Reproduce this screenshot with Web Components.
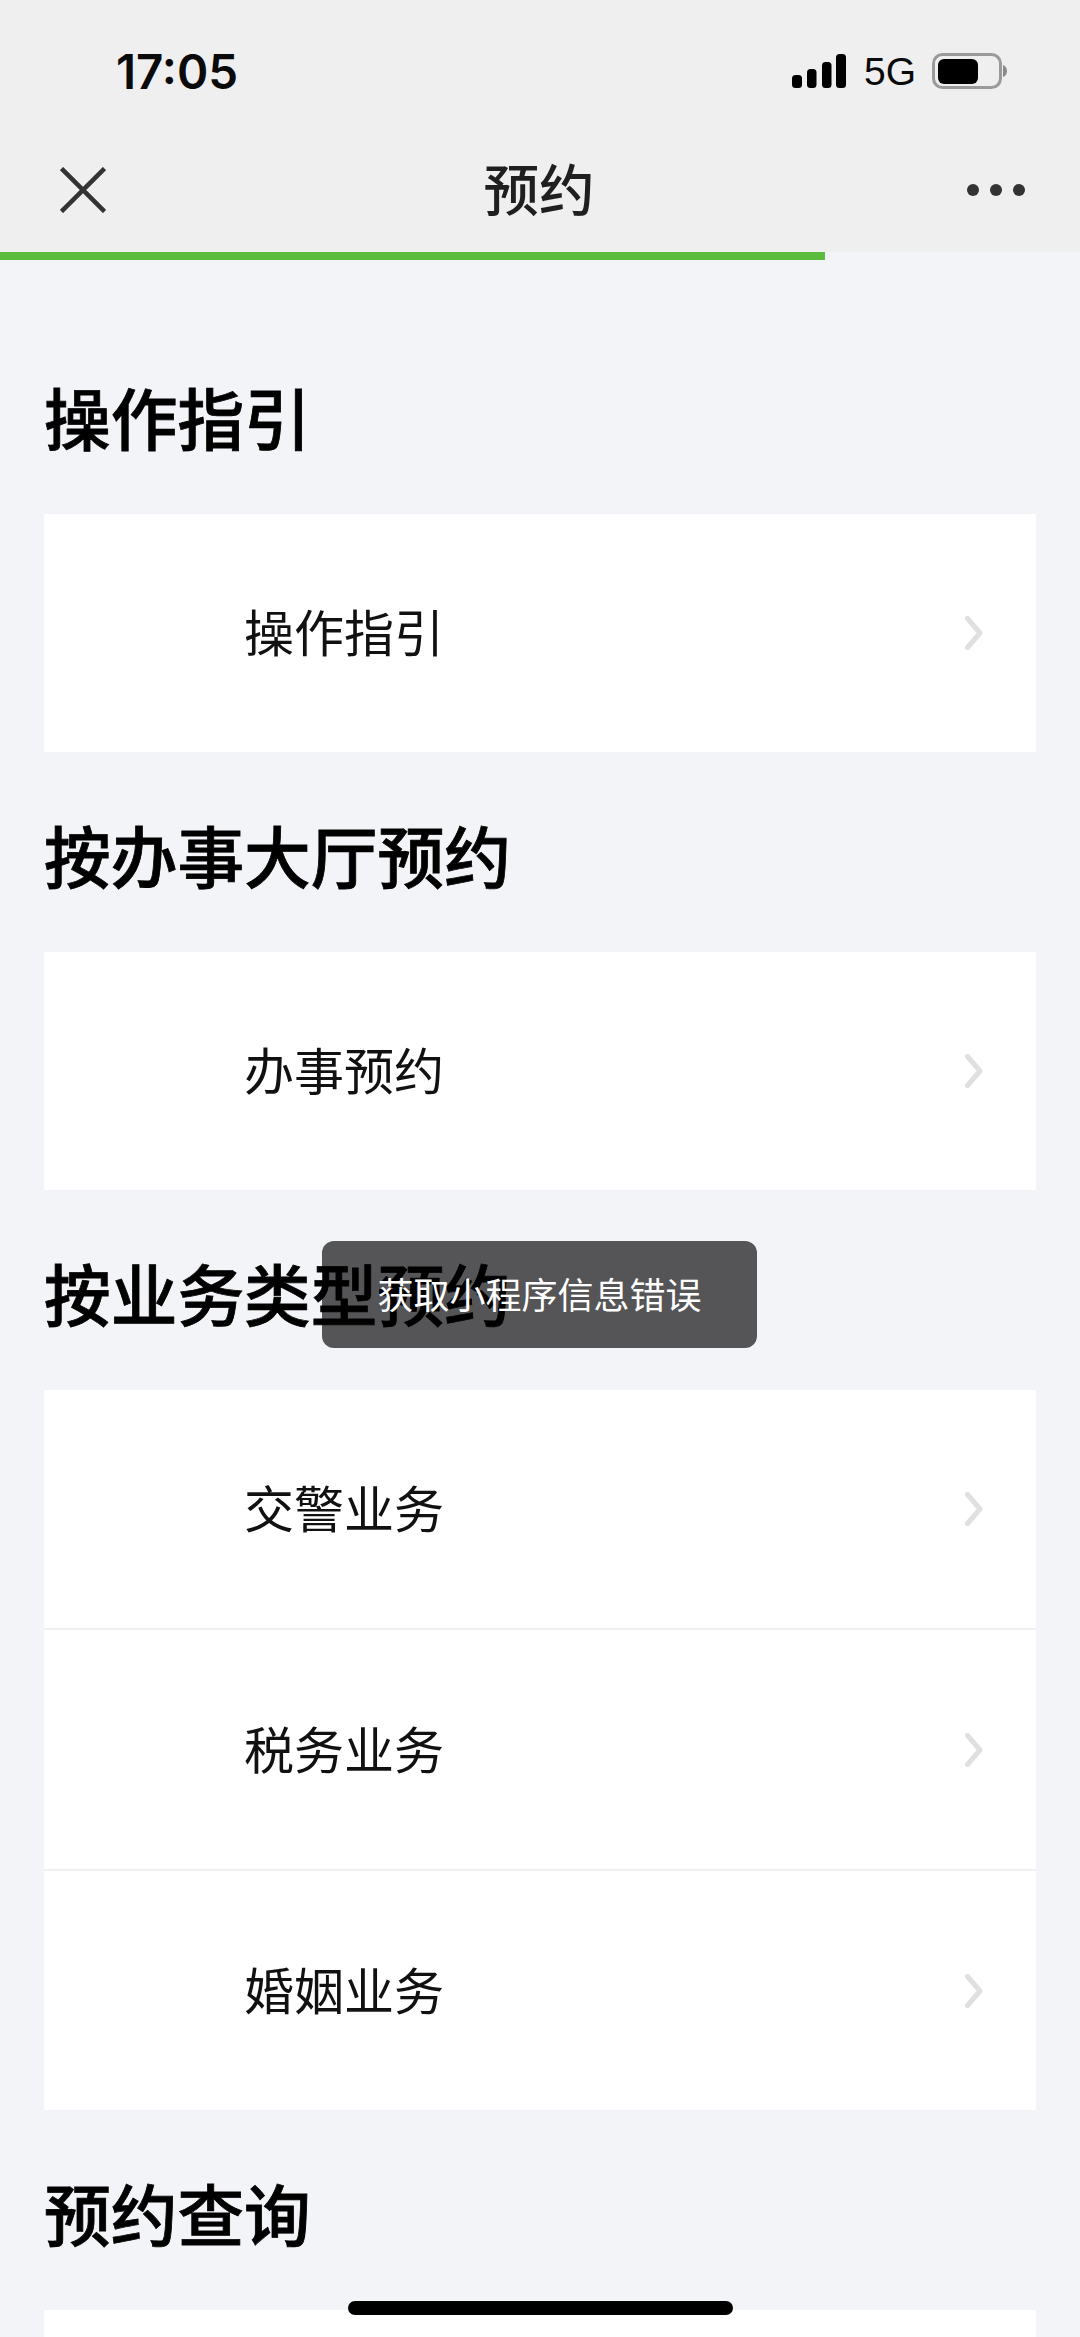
<!DOCTYPE html>
<html lang="zh">
<head>
<meta charset="utf-8">
<title>预约</title>
<style>
html,body{margin:0;padding:0;background:#f3f4f8}
body{width:1080px;height:2337px;overflow:hidden;position:relative;font-family:"Noto Sans CJK SC","Noto Sans",sans-serif}
</style>
</head>
<body>
<app-page>
  <status-bar></status-bar>
  <nav-bar title="预约"></nav-bar>
  <progress-line></progress-line>
  <main-list>
    <list-section heading="操作指引">
      <list-item label="操作指引"></list-item>
    </list-section>
    <list-section heading="按办事大厅预约">
      <list-item label="办事预约"></list-item>
    </list-section>
    <list-section heading="按业务类型预约">
      <list-item label="交警业务"></list-item>
      <list-item label="税务业务"></list-item>
      <list-item label="婚姻业务"></list-item>
    </list-section>
    <list-section heading="预约查询">
      <list-item label=""></list-item>
    </list-section>
  </main-list>
  <toast-box>获取小程序信息错误</toast-box>
  <home-bar></home-bar>
</app-page>
<script>
function def(name, css, html, init){
  customElements.define(name, class extends HTMLElement{
    constructor(){
      super();
      const r=this.attachShadow({mode:'open'});
      r.innerHTML='<style>'+css+'</style>'+html;
    }
    connectedCallback(){ if(init) init(this, this.shadowRoot); }
  });
}
def('app-page', ':host{display:flex;flex-direction:column;width:1080px;height:2337px;overflow:hidden;position:relative}', '<slot></slot>');

def('status-bar',
 `:host{flex:none;display:flex;align-items:center;justify-content:space-between;height:142px;background:#efefef;padding:0 73px 0 116px;box-sizing:border-box}
  .t{font:600 47.500px/1 Inter,"Liberation Sans",sans-serif;color:#0a0a0a;margin-top:2px}
  .r{display:flex;align-items:center}
  .g{font:400 39px/1 "Liberation Sans",sans-serif;color:#0a0a0a;margin:0 16px 0 18px}
  svg{display:block}`,
 `<span class="t">17:05</span>
  <div class="r">
   <svg width="54" height="34" viewBox="0 0 54 34"><rect x="0" y="21" width="10" height="13" rx="3.5"/><rect x="15" y="15" width="9.5" height="19" rx="3.5"/><rect x="30" y="8" width="9.5" height="26" rx="3.5"/><rect x="44" y="0" width="10" height="34" rx="3.5"/></svg>
   <span class="g">5G</span>
   <svg width="75" height="36" viewBox="0 0 75 36"><rect x="1.5" y="1.5" width="67" height="33" rx="9" fill="none" stroke="#9a9a9a" stroke-width="3"/><rect x="6" y="6" width="40" height="25" rx="6" fill="#000"/><path d="M71 12c3 1 4 3.500 4 6s-1 5-4 6z" fill="#8a8a8a"/></svg>
  </div>`);

def('nav-bar',
 `:host{flex:none;display:flex;align-items:center;justify-content:space-between;height:110px;background:#efefef;padding:0 55px 14px 60px;box-sizing:border-box;position:relative}
  .c{position:absolute;left:-2px;right:0;text-align:center;top:0;font:500 55.500px/90px "Noto Sans CJK SC",sans-serif;color:#1f1f1f}
  svg{display:block}`,
 `<svg width="46" height="46" viewBox="0 0 46 46"><path d="M1.500 1.500L44.500 44.500M44.500 1.500L1.500 44.500" stroke="#333" stroke-width="4.500" fill="none"/></svg>
  <span class="c"></span>
  <svg width="58" height="12" viewBox="0 0 58 12"><circle cx="6" cy="6" r="6" fill="#333"/><circle cx="29" cy="6" r="6" fill="#333"/><circle cx="52" cy="6" r="6" fill="#333"/></svg>`,
 (h,r)=>{r.querySelector('.c').textContent=h.getAttribute('title')});

def('progress-line',
 `:host{flex:none;display:block;height:8px;background:#f3f4f8}
  div{width:825px;height:8px;background:#5abb3c}`,
 '<div></div>');

def('main-list', ':host{flex:none;display:block;padding-top:54px}', '<slot></slot>');

def('list-section',
 `:host{display:block}
  h2{margin:0;height:200px;box-sizing:border-box;padding:10px 0 0 44px;font:500 66.700px/184px "Noto Sans CJK SC",sans-serif;-webkit-text-stroke:.8px #000;color:#000}
  .card{margin:0 44px;background:#fff;display:flex;flex-direction:column}`,
 '<h2></h2><div class="card"><slot></slot></div>',
 (h,r)=>{r.querySelector('h2').textContent=h.getAttribute('heading')});

def('list-item',
 `:host{flex:none;display:flex;align-items:center;justify-content:space-between;height:238px;box-sizing:border-box;padding:0 53px 0 200px;border-top:2px solid #f0f0f0;background:#fff}
  :host(:first-child){border-top:0}
  :host(:not(:first-child)){height:241px}
  span{font:400 50px/1.2 "Noto Sans CJK SC",sans-serif;color:#111;margin-top:-6px}
  svg{display:block}`,
 `<span></span><svg width="18" height="34" viewBox="0 0 18 34"><path d="M2.500 2.500L15 17L2.500 31.500" fill="none" stroke="#e0e0e0" stroke-width="5" stroke-linecap="round" stroke-linejoin="round"/></svg>`,
 (h,r)=>{r.querySelector('span').textContent=h.getAttribute('label')});

def('toast-box',
 `:host{position:absolute;left:322px;top:1241px;width:435px;height:107px;padding-bottom:4px;box-sizing:border-box;background:rgba(0,0,0,.65);border-radius:12px;display:flex;align-items:center;justify-content:center;color:#fff;font:400 36px/1 "Noto Sans CJK SC",sans-serif}`,
 '<slot></slot>');

def('home-bar',
 `:host{position:absolute;left:348px;top:2301px;width:385px;height:14px;background:#000;border-radius:7px}`,
 '');
</script>
</body>
</html>
